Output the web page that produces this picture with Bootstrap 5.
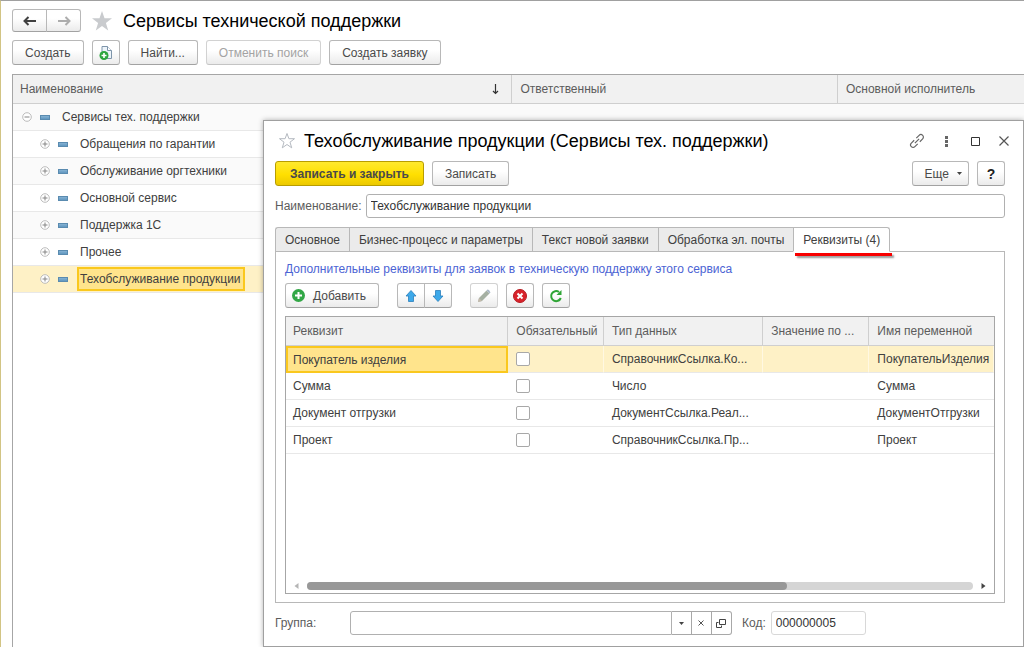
<!DOCTYPE html>
<html lang="ru">
<head>
<meta charset="utf-8">
<meta name="viewport" content="width=device-width, initial-scale=1">
<title>Сервисы технической поддержки</title>
<link rel="stylesheet" href="https://cdn.jsdelivr.net/npm/bootstrap@5.3.0/dist/css/bootstrap.min.css">
<style>
  body { font-family: "Liberation Sans", Arial, sans-serif; font-size: 12px; line-height: 16px; color: #404040; background: #fff; }
  .app { min-height: 100vh; border-top: 1px solid #a0a0a0; border-left: 1px solid #d2c484; padding-left: 11px; overflow: hidden; }
  svg { display: block; flex: none; }
  h1, h2 { font-size: 18px; line-height: 20px; font-weight: 400; color: #000; margin: 0; }
  .titlebar { height: 39px; gap: 11px; }
  .list-tools { margin-bottom: 9px; }

  .btn-ui { --bs-btn-font-size: 12px; --bs-btn-line-height: 16px; --bs-btn-padding-y: 0; --bs-btn-padding-x: 12px;
    --bs-btn-border-radius: 3px; --bs-btn-color: #4a4a4a; --bs-btn-border-color: #b8b8b8; --bs-btn-hover-color: #222; --bs-btn-hover-border-color: #999;
    --bs-btn-disabled-color: #a3a3a3; --bs-btn-disabled-border-color: #d2d2d2; --bs-btn-disabled-opacity: 1;
    height: 25px; display: inline-flex; align-items: center; justify-content: center; white-space: nowrap;
    background: linear-gradient(#fff 40%, #ebebeb); border-bottom-color: #a2a2a2; }
  .btn-ui:disabled { border-bottom-color: #c4c4c4; }
  .btn-square { width: 28px; padding: 0; }
  .btn-nav { width: 35px; height: 23px; padding: 0; }
  .btn-main { padding: 0 14px; background: linear-gradient(#ffe92e, #ffdf00 55%, #ecc900); border-color: #b89d00; font-weight: 700; }
  .btn-more { padding-right: 6px; }
  .btn-help { font-size: 14px; font-weight: 700; color: #222; }
  .btn-add { padding-left: 6px; }
  .btn-bare { border: 0; background: none; padding: 0; width: 16px; height: 16px; display: flex; align-items: center; justify-content: center; }

  .grid { table-layout: fixed; width: 100%; margin: 0; border-collapse: separate; border-spacing: 0; color: #404040; }
  .grid th { height: 29px; padding: 0 8px; font-weight: 400; color: #5c5c5c; background: #f1f1f1; border-bottom: 1px solid #cfcfcf; border-right: 1px solid #cfcfcf; white-space: nowrap; }
  .grid th:last-child { border-right: 0; }
  .grid td { height: 27px; padding: 0 8px; border-bottom: 1px solid #e8e8e8; white-space: nowrap; vertical-align: middle; }
  .grid th:first-child, .grid td:first-child { padding-left: 7px; }
  .list-frame { border-top: 1px solid #a6a6a6; border-left: 1px solid #a6a6a6; min-height: 573px; }
  .list-frame tbody tr:nth-child(odd) td { background: #fafafa; }
  .list-frame tbody tr.chosen td, .chosen td { background: #fef1c6; }
  .node { padding-left: 2px; gap: 8px; height: 26px; }
  .node-child { padding-left: 20px; }
  .node-name { padding: 0 2px 0 1px; margin-left: 1px; height: 24px; border: 2px solid transparent; display: flex; align-items: center; }
  .chosen .node-name { background: #ffe48c; border-color: #fac81e; }

  .dialog { position: absolute; left: 263px; top: 120px; right: 0; bottom: 0; background: #fff; border: 1px solid #a0a0a0; box-shadow: 0 0 5px rgba(0,0,0,.3); padding: 0 18px 11px 11px; }
  .dialog-title { height: 40px; gap: 8px; }
  .window-tools { gap: 13px; margin-right: -7px; }
  .field { font-size: 12px; line-height: 16px; height: 24px; min-height: 0; padding: 0 4px; border: 1px solid #b0b0b0; border-radius: 3px; color: #333; }
  .field-code { width: 95px; border-color: #d8d8d8; }
  .caption { color: #5c5c5c; white-space: nowrap; }

  .tabs { border: 0; margin-top: 9px; }
  .tabs .nav-link { height: 25px; padding: 0 9px; margin: 0; font-size: 12px; color: #404040; background: #ebebeb; border: 1px solid #b8b8b8; border-right-width: 0; border-radius: 0; white-space: nowrap; position: relative; }
  .tabs .nav-item:first-child .nav-link { border-top-left-radius: 3px; }
  .tabs .nav-link.active { background: #fff; color: #404040; border: 1px solid #b8b8b8; border-bottom-color: #fff; border-radius: 0 3px 0 0; z-index: 1; }
  .tabs .nav-link.active::after { content: ""; position: absolute; left: 1px; right: -3px; bottom: -5px; height: 3px; background: #f80000; box-shadow: 2px 2px 2px rgba(0,0,0,.4); }
  .pane { border: 1px solid #b8b8b8; margin-top: -1px; padding: 9px 9px 8px; min-height: 0; }
  .hint { color: #4c64d4; text-decoration: none; }
  .attr-tools { margin: 6px 0 8px; gap: 18px; }
  .attr-frame { border: 1px solid #a6a6a6; }
  .attr-frame td.picked, .attr-frame td.picked:first-child { background: #ffe48c; border: 2px solid #fac81e; padding: 0 5px; }
  .attr-frame .chosen td + td { border-right: 1px solid #fff8e2; }
  .attr-frame .tick { width: 14px; height: 14px; margin: 0; border: 1px solid #a8a8a8; border-radius: 2px; display: block; background-color: #fff; }
  .scroller { height: 14px; gap: 8px; padding: 0 8px; }
  .scroll-track { height: 8px; border-radius: 4px; background: #d5d5d5; }
  .scroll-thumb { height: 8px; border-radius: 4px; background: #989898; }
  .combo .field { border-radius: 3px 0 0 3px; min-width: 0; }
  .combo-btn { flex: none; width: 20px; height: 24px; padding: 0; background: #fff; border: 1px solid #a8a8a8; border-left: 0; display: flex; align-items: center; justify-content: center; }
  .combo-btn:last-child { border-radius: 0 3px 3px 0; }
  .group-caption { width: 75px; }
  .code-side { width: 37.4%; padding-left: 10px; gap: 5px; }
</style>
</head>
<body>
<svg width="0" height="0" class="position-absolute" aria-hidden="true">
  <defs>
    <linearGradient id="bar" x1="0" y1="0" x2="0" y2="1"><stop offset="0" stop-color="#8bb6d6"/><stop offset="1" stop-color="#5b93bd"/></linearGradient>
    <symbol id="plus" viewBox="0 0 10 10"><circle cx="5" cy="5" r="4.3" fill="#fff" stroke="#b4b4b4" stroke-width=".9"/><path d="M2.5 5h5M5 2.5v5" stroke="#858585" fill="none"/></symbol>
    <symbol id="minus" viewBox="0 0 10 10"><circle cx="5" cy="5" r="4.3" fill="#fff" stroke="#b4b4b4" stroke-width=".9"/><path d="M2.5 5h5" stroke="#858585" fill="none"/></symbol>
    <symbol id="item" viewBox="0 0 10 5"><rect x=".5" y=".5" width="9" height="4" fill="url(#bar)" stroke="#5a8bb0"/></symbol>
  </defs>
</svg>

<main class="app">
  <header class="titlebar d-flex align-items-center">
    <div class="btn-group" role="group" aria-label="Навигация">
      <button type="button" class="btn btn-ui btn-nav" aria-label="Назад"><svg width="14" height="10" viewBox="0 0 14 10"><path d="M5.5 1 1.5 5l4 4M2 5h11" fill="none" stroke="#404040" stroke-width="2"/></svg></button>
      <button type="button" class="btn btn-ui btn-nav" aria-label="Вперед"><svg width="14" height="10" viewBox="0 0 14 10"><path d="m8.5 1 4 4-4 4M12 5H1" fill="none" stroke="#adadad" stroke-width="2"/></svg></button>
    </div>
    <svg width="20" height="20" viewBox="0 0 20 20"><path d="m10 0 2.5 7.3H20l-6.1 4.6 2.3 7.6L10 15l-6.2 4.5 2.3-7.6L0 7.300h7.500z" fill="#c9cbce"/></svg>
    <h1>Сервисы технической поддержки</h1>
  </header>

  <div class="list-tools d-flex gap-2">
    <button type="button" class="btn btn-ui">Создать</button>
    <button type="button" class="btn btn-ui btn-square" aria-label="Создать копированием"><svg width="14" height="16" viewBox="0 0 14 16"><path d="M3 1.5h5.5l4 4v8H3z" fill="#edf4fa" stroke="#7e95aa"/><path d="M8.500 1.500v4h4" fill="#fff" stroke="#7e95aa"/><circle cx="5" cy="10.500" r="4.500" fill="#2ca53e"/><path d="M2.500 10.500h5M5 8v5" stroke="#fff" stroke-width="1.600"/></svg></button>
    <button type="button" class="btn btn-ui">Найти...</button>
    <button type="button" class="btn btn-ui" disabled>Отменить поиск</button>
    <button type="button" class="btn btn-ui">Создать заявку</button>
  </div>

  <div class="list-frame">
    <table class="grid">
      <colgroup><col style="width:49.4%"><col style="width:32.2%"><col></colgroup>
      <thead><tr>
        <th><div class="d-flex justify-content-between align-items-center pe-1">Наименование <svg width="7" height="11" viewBox="0 0 7 11"><path d="M3.5 0v9M1 7l2.500 2.500L6 7" fill="none" stroke="#333" stroke-width="1.200"/></svg></div></th>
        <th>Ответственный</th><th>Основной исполнитель</th>
      </tr></thead>
      <tbody>
        <tr><td colspan="3"><div class="node d-flex align-items-center"><svg width="10" height="10"><use href="#minus"/></svg><svg width="10" height="5"><use href="#item"/></svg><span class="node-name">Сервисы тех. поддержки</span></div></td></tr>
        <tr><td colspan="3"><div class="node node-child d-flex align-items-center"><svg width="10" height="10"><use href="#plus"/></svg><svg width="10" height="5"><use href="#item"/></svg><span class="node-name">Обращения по гарантии</span></div></td></tr>
        <tr><td colspan="3"><div class="node node-child d-flex align-items-center"><svg width="10" height="10"><use href="#plus"/></svg><svg width="10" height="5"><use href="#item"/></svg><span class="node-name">Обслуживание оргтехники</span></div></td></tr>
        <tr><td colspan="3"><div class="node node-child d-flex align-items-center"><svg width="10" height="10"><use href="#plus"/></svg><svg width="10" height="5"><use href="#item"/></svg><span class="node-name">Основной сервис</span></div></td></tr>
        <tr><td colspan="3"><div class="node node-child d-flex align-items-center"><svg width="10" height="10"><use href="#plus"/></svg><svg width="10" height="5"><use href="#item"/></svg><span class="node-name">Поддержка 1С</span></div></td></tr>
        <tr><td colspan="3"><div class="node node-child d-flex align-items-center"><svg width="10" height="10"><use href="#plus"/></svg><svg width="10" height="5"><use href="#item"/></svg><span class="node-name">Прочее</span></div></td></tr>
        <tr class="chosen"><td colspan="3"><div class="node node-child d-flex align-items-center"><svg width="10" height="10"><use href="#plus"/></svg><svg width="10" height="5"><use href="#item"/></svg><span class="node-name">Техобслуживание продукции</span></div></td></tr>
      </tbody>
    </table>
  </div>
</main>

<section class="dialog d-flex flex-column" role="dialog" aria-labelledby="dialogTitle">
  <header class="dialog-title d-flex align-items-center">
    <svg width="17" height="18" viewBox="0 0 17 18" class="ms-1"><path d="m8 1.500 1.900 5.200h5.600l-4.500 3.500 1.700 5.600L8 12.500l-4.700 3.300L5 10.200.500 6.700h5.600z" fill="#fff" stroke="#b4b9c0"/></svg>
    <h2 id="dialogTitle" class="me-auto">Техобслуживание продукции (Сервисы тех. поддержки)</h2>
    <div class="window-tools d-flex">
      <button type="button" class="btn-bare" aria-label="Ссылка"><svg width="16" height="16" viewBox="0 0 16 16"><g transform="rotate(-45 8 8)" fill="none" stroke="#666" stroke-width="1.200"><path d="M6.500 10.500H2.500a2.500 2.500 0 0 1 0-5h4M9.500 5.500h4a2.500 2.500 0 0 1 0 5h-4M5 8h6"/></g></svg></button>
      <button type="button" class="btn-bare" aria-label="Меню"><svg width="3" height="11" viewBox="0 0 3 11" fill="#666"><path d="M0 0h3v3H0zM0 4h3v3H0zM0 8h3v3H0z"/></svg></button>
      <button type="button" class="btn-bare" aria-label="Развернуть"><svg width="9" height="9" viewBox="0 0 9 9"><path d="M.500.500h8v8h-8z" fill="none" stroke="#333"/></svg></button>
      <button type="button" class="btn-bare" aria-label="Закрыть"><svg width="10" height="10" viewBox="0 0 10 10"><path d="m.500.500 9 9m0-9-9 9" stroke="#555" stroke-width="1.200"/></svg></button>
    </div>
  </header>

  <div class="d-flex gap-2 mb-2">
    <button type="button" class="btn btn-ui btn-main">Записать и закрыть</button>
    <button type="button" class="btn btn-ui me-auto">Записать</button>
    <button type="button" class="btn btn-ui btn-more">Еще<svg width="5" height="3" viewBox="0 0 5 3" class="ms-2"><path d="M0 0h5L2.500 3z" fill="#444"/></svg></button>
    <button type="button" class="btn btn-ui btn-square btn-help">?</button>
  </div>

  <div class="d-flex align-items-center gap-1">
    <label class="caption" for="serviceName">Наименование:</label>
    <input id="serviceName" type="text" class="form-control field" value="Техобслуживание продукции">
  </div>

  <ul class="nav nav-tabs tabs flex-nowrap" role="tablist">
    <li class="nav-item"><button type="button" class="nav-link" role="tab">Основное</button></li>
    <li class="nav-item"><button type="button" class="nav-link" role="tab">Бизнес-процесс и параметры</button></li>
    <li class="nav-item"><button type="button" class="nav-link" role="tab">Текст новой заявки</button></li>
    <li class="nav-item"><button type="button" class="nav-link" role="tab">Обработка эл. почты</button></li>
    <li class="nav-item"><button type="button" class="nav-link active" role="tab" aria-selected="true">Реквизиты (4)</button></li>
  </ul>

  <div class="pane d-flex flex-column flex-grow-1">
    <a href="#attributes" class="hint">Дополнительные реквизиты для заявок в техническую поддержку этого сервиса</a>
    <div class="attr-tools d-flex">
      <button type="button" class="btn btn-ui btn-add gap-2"><svg width="13" height="13" viewBox="0 0 13 13"><circle cx="6.500" cy="6.500" r="6.500" fill="#32a746"/><path d="M3 6.500h7M6.500 3v7" stroke="#fff" stroke-width="2"/></svg>Добавить</button>
      <div class="btn-group" role="group" aria-label="Порядок">
        <button type="button" class="btn btn-ui btn-square" aria-label="Вверх"><svg width="12" height="12" viewBox="0 0 12 12"><path d="m6 .500 5 5.500H8.500v5.500h-5V6H1z" fill="#3da9ea" stroke="#2b7fbb" stroke-width=".8"/></svg></button>
        <button type="button" class="btn btn-ui btn-square" aria-label="Вниз"><svg width="12" height="12" viewBox="0 0 12 12"><path d="m6 11.500 5-5.500H8.500V.500h-5V6H1z" fill="#3da9ea" stroke="#2b7fbb" stroke-width=".8"/></svg></button>
      </div>
      <div class="d-flex gap-2">
        <button type="button" class="btn btn-ui btn-square" disabled aria-label="Изменить"><svg width="14" height="14" viewBox="0 0 14 14"><path d="m1 13 1-4 7.500-7.500 3 3L5 12z" fill="#a5b0a3"/><path d="m9.500 1.500 1-1q1.500-.5 3 3l-1 1z" fill="#a9b7c6"/><path d="m1 13 1-4 3 3z" fill="#c5baac"/></svg></button>
        <button type="button" class="btn btn-ui btn-square" aria-label="Удалить"><svg width="14" height="14" viewBox="0 0 14 14"><circle cx="7" cy="7" r="6.500" fill="#d8232b" stroke="#b51b22"/><path d="m4.500 4.500 5 5m0-5-5 5" stroke="#fff" stroke-width="2"/></svg></button>
        <button type="button" class="btn btn-ui btn-square" aria-label="Обновить"><svg width="14" height="14" viewBox="0 0 14 14"><path d="M11.800 9A5 5 0 1 1 10 3" fill="none" stroke="#2fa536" stroke-width="2"/><path d="M12.500 1v5H7.500z" fill="#2fa536"/></svg></button>
      </div>
    </div>

    <div class="attr-frame d-flex flex-column flex-grow-1" id="attributes">
      <table class="grid">
        <colgroup><col style="width:31.4%"><col style="width:13.5%"><col style="width:22.5%"><col style="width:15%"><col></colgroup>
        <thead><tr><th>Реквизит</th><th>Обязательный</th><th>Тип данных</th><th>Значение по ...</th><th>Имя переменной</th></tr></thead>
        <tbody>
          <tr class="chosen"><td class="picked">Покупатель изделия</td><td><input type="checkbox" class="form-check-input tick" aria-label="Обязательный: Покупатель изделия"></td><td>СправочникСсылка.Ко...</td><td></td><td>ПокупательИзделия</td></tr>
          <tr><td>Сумма</td><td><input type="checkbox" class="form-check-input tick" aria-label="Обязательный: Сумма"></td><td>Число</td><td></td><td>Сумма</td></tr>
          <tr><td>Документ отгрузки</td><td><input type="checkbox" class="form-check-input tick" aria-label="Обязательный: Документ отгрузки"></td><td>ДокументСсылка.Реал...</td><td></td><td>ДокументОтгрузки</td></tr>
          <tr><td>Проект</td><td><input type="checkbox" class="form-check-input tick" aria-label="Обязательный: Проект"></td><td>СправочникСсылка.Пр...</td><td></td><td>Проект</td></tr>
        </tbody>
      </table>
      <div class="scroller d-flex align-items-center mt-auto">
        <svg width="5" height="6" viewBox="0 0 5 6"><path d="M4.500 0v6L.500 3z" fill="#b5b5b5"/></svg>
        <div class="scroll-track flex-grow-1"><div class="scroll-thumb" style="width:72%"></div></div>
        <svg width="5" height="6" viewBox="0 0 5 6"><path d="M.500 0v6l4-3z" fill="#444"/></svg>
      </div>
    </div>
  </div>

  <div class="row g-0 align-items-center mt-2">
    <div class="col-auto"><label class="caption group-caption" for="groupName">Группа:</label></div>
    <div class="col d-flex combo">
      <input id="groupName" type="text" class="form-control field">
      <button type="button" class="combo-btn" aria-label="Выбрать из списка"><svg width="5" height="3" viewBox="0 0 5 3"><path d="M0 0h5L2.500 3z" fill="#444"/></svg></button>
      <button type="button" class="combo-btn" aria-label="Очистить"><svg width="6" height="6" viewBox="0 0 6 6"><path d="m.500.500 5 5m0-5-5 5" stroke="#555"/></svg></button>
      <button type="button" class="combo-btn" aria-label="Открыть"><svg width="10" height="9" viewBox="0 0 10 9"><path d="M3.500.500h6v5h-6zM2.500 3.500h-2v5h5v-2" fill="none" stroke="#444"/></svg></button>
    </div>
    <div class="code-side d-flex align-items-center">
      <label class="caption" for="code">Код:</label>
      <input id="code" type="text" class="form-control field field-code" value="000000005">
    </div>
  </div>
</section>

<script src="https://cdn.jsdelivr.net/npm/bootstrap@5.3.0/dist/js/bootstrap.bundle.min.js"></script>
</body>
</html>
